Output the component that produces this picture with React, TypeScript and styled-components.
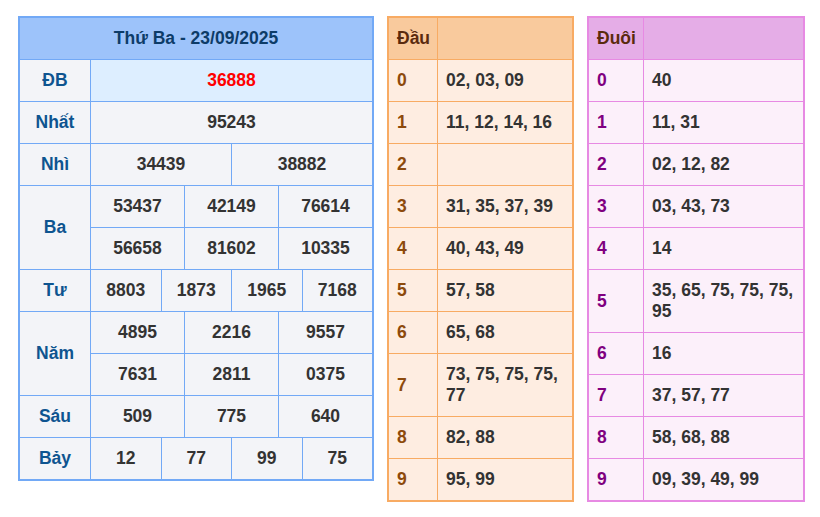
import React from "react";
import styled, { createGlobalStyle } from "styled-components";

const Global = createGlobalStyle`
  html, body { margin: 0; padding: 0; background: #ffffff; }
  body { font-family: "Liberation Sans", Arial, sans-serif; }
`;

const Page = styled.div`
  display: flex;
  align-items: flex-start;
  gap: 13px;
  padding: 16px 0 0 18px;
  font-family: "Liberation Sans", Arial, sans-serif;
  font-weight: bold;
  font-size: 17.5px;
`;

const MainGrid = styled.div`
  width: 352px;
  display: grid;
  grid-template-columns: 70px repeat(12, 1fr);
  grid-auto-rows: 41px;
  gap: 1px;
  background: #72a9f6;
  border: 2px solid #72a9f6;
`;

const MainHead = styled.div`
  grid-column: 1 / -1;
  background: #9dc3fa;
  color: #0d3c68;
  display: flex;
  align-items: center;
  justify-content: center;
`;

const Label = styled.div<{ $rows?: number }>`
  grid-column: 1;
  grid-row: span ${(p) => p.$rows ?? 1};
  background: #f3f4f8;
  color: #0e5490;
  display: flex;
  align-items: center;
  justify-content: center;
`;

const Value = styled.div<{ $span: number; $special?: boolean }>`
  grid-column: span ${(p) => p.$span};
  background: ${(p) => (p.$special ? "#ddeeff" : "#f3f4f8")};
  color: ${(p) => (p.$special ? "#ff0000" : "#333333")};
  display: flex;
  align-items: center;
  justify-content: center;
`;

const SideGrid = styled.div<{ $w: number; $left: number; $line: string; $bg: string }>`
  width: ${(p) => p.$w}px;
  display: grid;
  grid-template-columns: ${(p) => p.$left}px 1fr;
  gap: 1px;
  background: ${(p) => p.$line};
  border: 2px solid ${(p) => p.$line};
`;

const SideHead = styled.div<{ $bg: string }>`
  background: ${(p) => p.$bg};
  color: #5a2a0e;
  padding: 10px 8px;
  line-height: 21px;
  min-height: 21px;
`;

const SideKey = styled.div<{ $bg: string; $color: string }>`
  background: ${(p) => p.$bg};
  color: ${(p) => p.$color};
  padding: 10px 8px;
  line-height: 21px;
  display: flex;
  align-items: center;
`;

const SideVal = styled.div<{ $bg: string }>`
  background: ${(p) => p.$bg};
  color: #333333;
  padding: 10px 8px;
  line-height: 21px;
`;

type Prize = { label: string; rows: string[][] };

const prizes: Prize[] = [
  { label: "Nhất", rows: [["95243"]] },
  { label: "Nhì", rows: [["34439", "38882"]] },
  { label: "Ba", rows: [["53437", "42149", "76614"], ["56658", "81602", "10335"]] },
  { label: "Tư", rows: [["8803", "1873", "1965", "7168"]] },
  { label: "Năm", rows: [["4895", "2216", "9557"], ["7631", "2811", "0375"]] },
  { label: "Sáu", rows: [["509", "775", "640"]] },
  { label: "Bảy", rows: [["12", "77", "99", "75"]] },
];

const dau = [
  "02, 03, 09",
  "11, 12, 14, 16",
  "",
  "31, 35, 37, 39",
  "40, 43, 49",
  "57, 58",
  "65, 68",
  "73, 75, 75, 75, 77",
  "82, 88",
  "95, 99",
];

const duoi = [
  "40",
  "11, 31",
  "02, 12, 82",
  "03, 43, 73",
  "14",
  "35, 65, 75, 75, 75, 95",
  "16",
  "37, 57, 77",
  "58, 68, 88",
  "09, 39, 49, 99",
];

type SideProps = {
  title: string;
  data: string[];
  w: number;
  left: number;
  line: string;
  head: string;
  bg: string;
  keyColor: string;
};

function Side({ title, data, w, left, line, head, bg, keyColor }: SideProps) {
  return (
    <SideGrid $w={w} $left={left} $line={line} $bg={bg}>
      <SideHead $bg={head}>{title}</SideHead>
      <SideHead $bg={head} />
      {data.map((v, i) => (
        <React.Fragment key={i}>
          <SideKey $bg={bg} $color={keyColor}>{i}</SideKey>
          <SideVal $bg={bg}>{v}</SideVal>
        </React.Fragment>
      ))}
    </SideGrid>
  );
}

export default function App() {
  return (
    <>
      <Global />
      <Page>
        <MainGrid>
          <MainHead>Thứ Ba - 23/09/2025</MainHead>
          <Label>ĐB</Label>
          <Value $span={12} $special>36888</Value>
          {prizes.map((p) => (
            <React.Fragment key={p.label}>
              <Label $rows={p.rows.length}>{p.label}</Label>
              {p.rows.map((r, ri) =>
                r.map((v, vi) => (
                  <Value key={`${ri}-${vi}`} $span={12 / r.length}>
                    {v}
                  </Value>
                ))
              )}
            </React.Fragment>
          ))}
        </MainGrid>
        <Side
          title="Đầu"
          data={dau}
          w={183}
          left={48}
          line="#f8ab63"
          head="#f9ca9d"
          bg="#feede1"
          keyColor="#8d4a0c"
        />
        <Side
          title="Đuôi"
          data={duoi}
          w={214}
          left={54}
          line="#e78ae3"
          head="#e5ade7"
          bg="#fcf0fa"
          keyColor="#800080"
        />
      </Page>
    </>
  );
}
